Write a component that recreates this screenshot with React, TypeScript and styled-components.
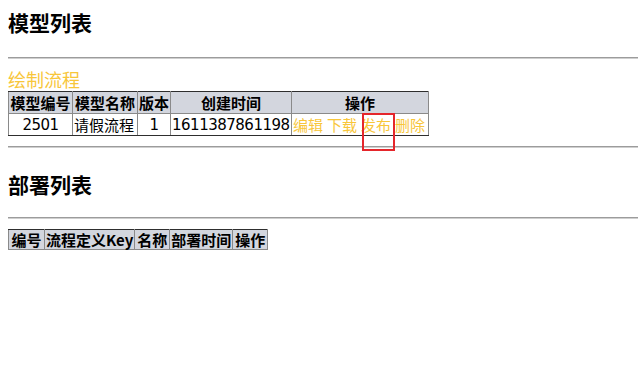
import React from "react";
import styled, { createGlobalStyle } from "styled-components";

const Global = createGlobalStyle`
  html, body { background: #ffffff; }
  body {
    margin: 8px 0 8px 8px;
    font-family: "Noto Sans CJK SC", "Noto Sans", sans-serif;
    color: #000;
    position: relative;
  }
`;

const Page = styled.div`
  position: relative;
  display: flex;
  flex-direction: column;
  align-items: flex-start;
`;

const Title = styled.h2<{ $top: number }>`
  margin: ${(p) => p.$top}px 0 0 0;
  font-size: 21px;
  line-height: 29px;
  font-weight: 700;
`;

const Rule = styled.hr<{ $top: number }>`
  align-self: stretch;
  margin: ${(p) => p.$top}px 0 0 0;
  height: 0;
  border: none;
  border-top: 1px solid #9c9c9c;
  border-bottom: 1px solid #cfcfcf;
`;

const DrawLink = styled.a`
  margin-top: 9px;
  font-size: 18px;
  line-height: 22px;
  color: #f8c63a;
  text-decoration: none;
  cursor: pointer;
`;

const Table = styled.table<{ $top: number }>`
  margin-top: ${(p) => p.$top}px;
  border-collapse: collapse;
  border: 1px solid #2e2e2e;
  font-size: 15px;
`;

const Th = styled.th<{ $w: number; $h: number }>`
  width: ${(p) => p.$w}px;
  min-width: ${(p) => p.$w}px;
  height: ${(p) => p.$h}px;
  box-sizing: border-box;
  padding: 0 1px;
  background: #d3d6de;
  border: 1px solid #8a8a8a;
  border-top-color: #2e2e2e;
  font-weight: 700;
  text-align: center;
  white-space: nowrap;
  line-height: 18px;
`;

const Td = styled.td<{ $align?: string; $num?: boolean }>`
  height: 22px;
  box-sizing: border-box;
  padding: 0 1px;
  border: 1px solid #8a8a8a;
  border-bottom-color: #2e2e2e;
  text-align: ${(p) => p.$align || "center"};
  white-space: nowrap;
  line-height: 18px;
  font-family: ${(p) =>
    p.$num
      ? `"DejaVu Sans", "Noto Sans CJK SC", sans-serif`
      : `"Noto Sans CJK SC", "Noto Sans", sans-serif`};
  letter-spacing: ${(p) => (p.$num ? "-0.5px" : "0")};
`;

const OpLink = styled.a`
  color: #f8c63a;
  text-decoration: none;
  cursor: pointer;
  margin-right: 4px;
  &:last-child {
    margin-right: 0;
  }
`;

const Highlight = styled.div`
  position: absolute;
  left: 354px;
  top: 105px;
  width: 33px;
  height: 38px;
  box-sizing: border-box;
  border: 2px solid #e5262b;
  pointer-events: none;
`;

const modelCols = [
  { label: "模型编号", w: 64 },
  { label: "模型名称", w: 65 },
  { label: "版本", w: 33 },
  { label: "创建时间", w: 121 },
  { label: "操作", w: 137 },
];

const deployCols = [
  { label: "编号", w: 36 },
  { label: "流程定义Key", w: 90 },
  { label: "名称", w: 35 },
  { label: "部署时间", w: 63 },
  { label: "操作", w: 35 },
];

const ops = ["编辑", "下载", "发布", "删除"];

export default function App() {
  return (
    <>
      <Global />
      <Page>
        <Title $top={0}>模型列表</Title>
        <Rule $top={20} />
        <DrawLink>绘制流程</DrawLink>
        <Table $top={1}>
          <thead>
            <tr>
              {modelCols.map((c) => (
                <Th key={c.label} $w={c.w} $h={22}>
                  {c.label}
                </Th>
              ))}
            </tr>
          </thead>
          <tbody>
            <tr>
              <Td $num>2501</Td>
              <Td $align="left">请假流程</Td>
              <Td $num>1</Td>
              <Td $align="left" $num>
                1611387861198
              </Td>
              <Td $align="left">
                {ops.map((o) => (
                  <OpLink key={o}>{o}</OpLink>
                ))}
              </Td>
            </tr>
          </tbody>
        </Table>
        <Rule $top={10} />
        <Title $top={22}>部署列表</Title>
        <Rule $top={18} />
        <Table $top={10}>
          <thead>
            <tr>
              {deployCols.map((c) => (
                <Th key={c.label} $w={c.w} $h={20}>
                  {c.label}
                </Th>
              ))}
            </tr>
          </thead>
        </Table>
        <Highlight />
      </Page>
    </>
  );
}
